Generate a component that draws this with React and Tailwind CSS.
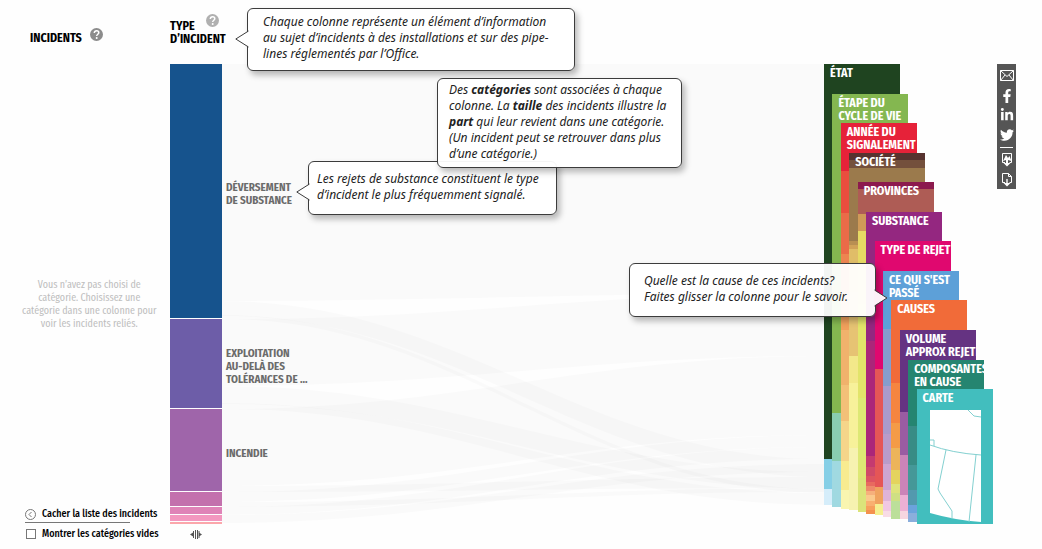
import React from "react";
import { FaFacebookF, FaLinkedinIn, FaTwitter } from "react-icons/fa";

const segments = [
  { h: 254, color: "#16538d", label: ["DÉVERSEMENT", "DE SUBSTANCE"] },
  { h: 89, color: "#6d5da8", label: ["EXPLOITATION", "AU-DELÀ DES", "TOLÉRANCES DE ..."] },
  { h: 82, color: "#9f65aa", label: ["INCENDIE"] },
  { h: 14, color: "#c371ad" },
  { h: 7, color: "#df83b7" },
  { h: 6, color: "#f397bf" },
  { h: 2, color: "#fba7ab" },
];

// Each column: title lines, top offset, then [colour, end offset] bands.
const columns = [
  { title: ["ÉTAT"], top: 0, bands: [["#1f4420", 395], ["#86cfe6", 425], ["#d5edfa", 441]] },
  { title: ["ÉTAPE DU", "CYCLE DE VIE"], top: 30, bands: [["#84b750", 349], ["#89cdb0", 397], ["#a0d9e1", 443]] },
  { title: ["ANNÉE DU", "SIGNALEMENT"], top: 59, bands: [["#e62239", 107], ["#ea4e3e", 149], ["#ea6b48", 190], ["#ed8450", 230], ["#f0a05c", 266], ["#f0b26c", 321], ["#f3c078", 357], ["#f5d58a", 397], ["#f8eb90", 426], ["#f9f5b0", 445]] },
  { title: ["SOCIÉTÉ"], top: 89, bands: [["#57332f", 96], ["#74503c", 104], ["#9b7a4c", 177], ["#b98f52", 181], ["#d1a258", 185], ["#e0bd68", 228], ["#e6c373", 292], ["#f3e88a", 319], ["#f7f19a", 384], ["#f6f2b0", 446]] },
  { title: ["PROVINCES"], top: 118, bands: [["#8c1a4e", 125], ["#ae5c55", 150], ["#cf9a58", 167], ["#e6d964", 240], ["#e2e46a", 334], ["#dde874", 414], ["#dbe47a", 448]] },
  { title: ["SUBSTANCE"], top: 148, bands: [["#942780", 277], ["#ab2679", 392], ["#c43a70", 403], ["#d04a68", 412], ["#dd5560", 418], ["#e86a5f", 422], ["#ee8a6a", 427], ["#f6b07c", 431], ["#fbc98c", 437], ["#f9b070", 442], ["#f7a05c", 446], ["#f4914e", 450]] },
  { title: ["TYPE DE REJET"], top: 177, bands: [["#e0086f", 305], ["#e55656", 423], ["#f0a35f", 440], ["#f6ef90", 451]] },
  { title: ["CE QUI S'EST", "PASSÉ"], top: 207, bands: [["#5da0d8", 265], ["#869dcd", 322], ["#aa9bcb", 370], ["#b99cca", 400], ["#cda6d2", 426], ["#dfb4d8", 437], ["#f1c8e2", 447], ["#f8dce6", 453]] },
  { title: ["CAUSES"], top: 236, bands: [["#f16b39", 319], ["#f5853f", 359], ["#f49b47", 384], ["#ecb45a", 406], ["#e4d35e", 420], ["#dfe37c", 429], ["#cfe083", 437], ["#bcdf9a", 455]] },
  { title: ["VOLUME", "APPROX REJETÉ"], top: 266, bands: [["#653382", 348], ["#9a5ca2", 391], ["#cb84b8", 431], ["#edb0d4", 447], ["#f6d5e0", 455]] },
  { title: ["COMPOSANTES", "EN CAUSE"], top: 296, bands: [["#258570", 362], ["#388c85", 401], ["#459898", 426], ["#5399ae", 441], ["#6ba3dc", 449], ["#8aaedc", 458]] },
  { title: ["CARTE"], top: 325, map: true, bands: [["#42bebe", 460]] },
];

// Ribbons: left start/end and right start/end offsets.
const ribbons = [
  [0, 237, 0, 229],
  [237, 252, 395, 413],
  [251, 255, 425, 429],
  [255, 322, 229, 292],
  [322, 340, 408, 425],
  [339, 345, 429, 441],
  [345, 422, 292, 371],
  [422, 428, 413, 424],
  [428, 438, 371, 383],
  [438, 443, 424, 428],
  [443, 451, 383, 395],
  [451, 459, 400, 408],
];

const condensed = "font-['Fira_Sans_Condensed','Roboto_Condensed','Liberation_Sans_Narrow',Roboto,sans-serif]";

function ribbonPath([a, b, c, d]) {
  return `M0 ${a}C240 ${a} 360 ${c} 602 ${c}V${d}C360 ${d} 240 ${b} 0 ${b}Z`;
}

function Help({ className }) {
  return (
    <button type="button" aria-label="Aide" className={`size-[13px] shrink-0 ${className}`}>
      <svg viewBox="0 0 13 13" className="block size-full">
        <circle cx="6.5" cy="6.5" r="6.5" fill="currentColor" />
        <path d="M4.3 5.1C4.3 3.6 5.2 2.8 6.6 2.8S8.8 3.6 8.8 4.8C8.8 6.2 6.7 6.3 6.7 8" fill="none" stroke="white" strokeWidth="1.5" />
        <circle cx="6.7" cy="9.9" r="1" fill="white" />
      </svg>
    </button>
  );
}

function Bubble({ className, arrow, children }) {
  return (
    <div className={`absolute rounded-md border border-[#3c3c3c] bg-white/95 font-['Noto_Sans',sans-serif] text-[12px] leading-4 whitespace-nowrap text-[#222] italic shadow-[3px_4px_6px_rgba(0,0,0,0.28)] ${className}`}>
      {arrow === "left" && (
        <svg viewBox="0 0 14 18" className="absolute top-[21px] right-full -mr-px h-[18px] w-[14px]">
          <path d="M14 1L1 9L14 17Z" fill="#fff" />
          <path d="M13.5 1L.8 9L13.5 17" fill="none" stroke="#3c3c3c" />
        </svg>
      )}
      {arrow === "right" && (
        <svg viewBox="0 0 14 18" className="absolute top-[25px] left-full -ml-px h-[18px] w-[14px]">
          <path d="M0 1L13 9L0 17Z" fill="#fcf0f7" />
          <path d="M.5 1L13 9L.5 17" fill="none" stroke="#3c3c3c" />
        </svg>
      )}
      {children}
    </div>
  );
}

function Column({ column }) {
  let from = column.top;
  return (
    <li className="relative w-[76px]" style={{ paddingTop: column.top }}>
      {column.bands.map(([color, end], i) => {
        const height = end - from;
        from = end;
        return <div key={i} style={{ height, backgroundColor: color }} />;
      })}
      <div className="absolute inset-x-0 overflow-hidden pt-[3px] pl-[6px] text-[12px] leading-[13px] font-bold whitespace-nowrap text-white" style={{ top: column.top }}>
        {column.title.map((line) => (
          <div key={line}>{line}</div>
        ))}
        {column.map && (
          <svg viewBox="0 0 51 113" className="mt-[5px] ml-[7px] block h-[113px] w-[51px]">
            <path d="M0 0H51V112Q24 110 0 103Z" fill="#fff" />
            <path d="M38 0L44 6L51 7M0 30H4V36M0 35Q22 43 51 45M16 40L8 79L10 83L22 101V109M46 45L39 112" fill="none" stroke="#83d0d0" />
          </svg>
        )}
      </div>
    </li>
  );
}

const shares = [
  { name: "Courriel", icon: <svg viewBox="0 0 14 11" className="h-[11px] w-[14px]"><path d="M.5.5H13.500V10.500H.5ZM.5.5L7 6.500L13.500.5M.5 10.500L5 5M13.500 10.500L9 5" fill="none" stroke="currentColor" /></svg> },
  { name: "Facebook", icon: <FaFacebookF className="size-[14px]" /> },
  { name: "LinkedIn", icon: <FaLinkedinIn className="size-[14px]" /> },
  { name: "Twitter", icon: <FaTwitter className="size-[14px]" /> },
  { name: "Télécharger l'image", line: true, icon: <svg viewBox="0 0 12 15" className="h-[15px] w-[12px]"><path d="M4 10.500H1.500V1.500H10.500V10.500H8.500" fill="none" stroke="currentColor" /><path d="M2 9L5 3L7 6L8.500 4L10.500 9L7 8H5ZM5 8H7V11H9.500L6 14.500L2.500 11H5Z" fill="currentColor" /></svg> },
  { name: "Télécharger le fichier", icon: <svg viewBox="0 0 12 15" className="h-[15px] w-[12px]"><path d="M4 10.500H1.500V1.500H7.500L10.500 4.500V10.500H8.500M7.500 1.500V4.500H10.500" fill="none" stroke="currentColor" /><path d="M5.300 7H6.700V11H9.500L6 14.500L2.500 11H5.300Z" fill="currentColor" /></svg> },
];

export default function App() {
  return (
    <main className={`flex bg-[#fefefe] pr-[26px] ${condensed} text-black`}>
      <aside className="flex w-[170px] shrink-0 flex-col justify-between">
        <div className="flex h-16 gap-[8px] pt-[28px] pl-[30px]">
          <h2 className="pt-[4px] text-[12px] leading-[13px] font-bold">INCIDENTS</h2>
          <Help className="text-[#8c8c8c]" />
        </div>
        <p className="self-start pt-[40px] pl-[22px] text-center text-[10px] leading-[13px] whitespace-nowrap text-[#bdbdbd]">
          Vous n’avez pas choisi de<br />catégorie. Choisissez une<br />catégorie dans une colonne pour<br />voir les incidents reliés.
        </p>
        <div className="pb-[7px] pl-[25px] text-[10px] leading-4 font-medium whitespace-nowrap">
          <button type="button" className="flex items-center gap-[6px]">
            <svg viewBox="0 0 11 11" className="size-[11px]" fill="none" stroke="#777">
              <circle cx="5.500" cy="5.500" r="5" />
              <path d="M6.500 3L4 5.500L6.500 8" />
            </svg>
            Cacher la liste des incidents
          </button>
          <div className="mb-[3px] w-[105px] border-b border-[#777]" />
          <label className="flex items-center gap-[6px]">
            <input type="checkbox" className="ml-px size-[10px] appearance-none border border-[#777] bg-white checked:bg-[#777]" />
            Montrer les catégories vides
          </label>
        </div>
      </aside>

      <section className="relative min-w-0 grow pb-[10px]">
        <div className="relative flex h-16 items-start pt-[20px]">
          <h2 className="text-[12px] leading-[13px] font-bold">TYPE<br />D’INCIDENT</h2>
          <Help className="absolute top-[14px] left-[36px] text-[#b0b0b0]" />
        </div>
        <div className="relative">
          <div className="absolute inset-y-0 right-0 left-[52px]">
            <svg viewBox="0 0 602 460" preserveAspectRatio="none" className="block size-full">
              {ribbons.map((r, i) => (
                <path key={i} d={ribbonPath(r)} fill="#001a10" fillOpacity="0.016" />
              ))}
            </svg>
          </div>
          <ul className="relative flex flex-col gap-px">
            {segments.map((s) => (
              <li key={s.color} className="flex items-center gap-[4px]" style={{ height: s.h }}>
                <div className="h-full w-[52px]" style={{ backgroundColor: s.color }} />
                {s.label && (
                  <div className="pt-[6px] text-[11px] leading-[13px] font-bold text-[#6b6b6b]">
                    {s.label.map((line) => (
                      <div key={line}>{line}</div>
                    ))}
                  </div>
                )}
              </li>
            ))}
          </ul>
        </div>
        <button type="button" aria-label="Déplacer la colonne" className="mt-[5px] flex h-[10px] w-[52px] items-center justify-center">
          <svg viewBox="0 0 12 9" className="h-[9px] w-[12px]">
            <path d="M3.500 1V8M5.500 0V9M7.500 0V9M9 1V8" stroke="#555" fill="none" />
            <path d="M0 4.500L3 2.500V6.500ZM12 4.500L9 2.500V6.500Z" fill="#555" />
          </svg>
        </button>

        <Bubble arrow="left" className="top-[8px] left-[77px] h-[63px] w-[328px] pt-[5px] pl-[15px]">
          Chaque colonne représente un élément d’information<br />au sujet d’incidents à des installations et sur des pipe-<br />lines réglementés par l’Office.
        </Bubble>
        <Bubble arrow="left" className="top-[161px] left-[138px] h-[54px] w-[249px] pt-[9px] pl-[8px]">
          Les rejets de substance constituent le type<br />d’incident le plus fréquemment signalé.
        </Bubble>
        <Bubble className="top-[78px] left-[267px] h-[90px] w-[245px] pt-[3px] pl-[11px]">
          Des <b>catégories</b> sont associées à chaque<br />colonne. La <b>taille</b> des incidents illustre la<br /><b>part</b> qui leur revient dans une catégorie.<br />(Un incident peut se retrouver dans plus<br />d’une catégorie.)
        </Bubble>
        <Bubble arrow="right" className="top-[263px] right-[-52px] z-10 h-[54px] w-[247px] pt-[9px] pl-[14px]">
          Quelle est la cause de ces incidents?<br />Faites glisser la colonne pour le savoir.
        </Bubble>
      </section>

      <ul className="mt-16 mr-[72px] grid w-[101px] shrink-0 grid-cols-12">
        {columns.map((column) => (
          <Column key={column.title[0]} column={column} />
        ))}
      </ul>

      <nav className="mt-16 flex h-[125px] w-[19px] shrink-0 flex-col items-center bg-[#555] pt-[2px] text-white">
        {shares.map((s) => (
          <React.Fragment key={s.name}>
            {s.line && <hr className="my-[2px] w-[13px] border-white" />}
            <button type="button" aria-label={s.name} className="flex min-h-0 w-full grow basis-0 items-center justify-center">
              {s.icon}
            </button>
          </React.Fragment>
        ))}
      </nav>
    </main>
  );
}
